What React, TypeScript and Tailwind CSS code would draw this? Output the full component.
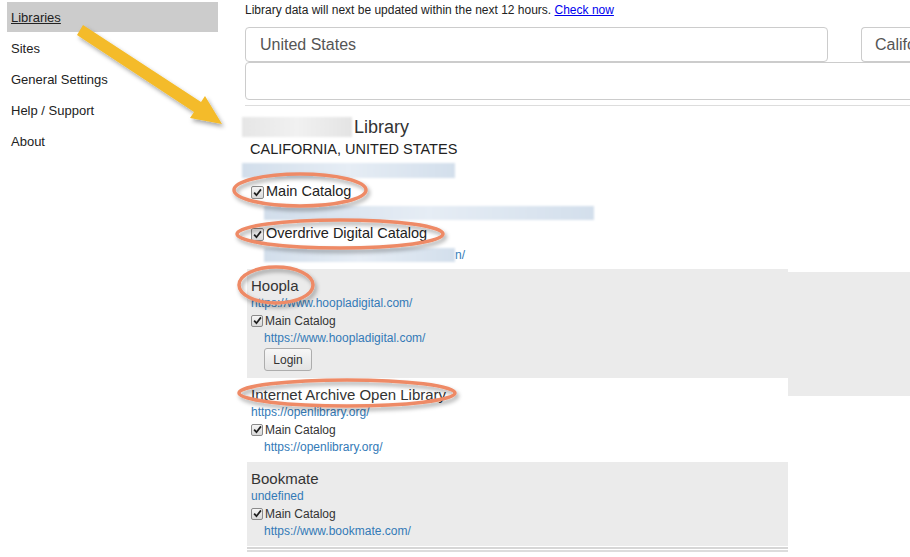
import React from "react";

type Catalog = { name: string; url: string };
type Provider = {
  id: string;
  name: string;
  url: string;
  catalogs: Catalog[];
  login?: boolean;
  shaded?: boolean;
};

const navItems = ["Libraries", "Sites", "General Settings", "Help / Support", "About"];

const providers: Provider[] = [
  {
    id: "hoopla",
    name: "Hoopla",
    url: "https://www.hoopladigital.com/",
    catalogs: [{ name: "Main Catalog", url: "https://www.hoopladigital.com/" }],
    login: true,
    shaded: true,
  },
  {
    id: "openlibrary",
    name: "Internet Archive Open Library",
    url: "https://openlibrary.org/",
    catalogs: [{ name: "Main Catalog", url: "https://openlibrary.org/" }],
  },
  {
    id: "bookmate",
    name: "Bookmate",
    url: "undefined",
    catalogs: [{ name: "Main Catalog", url: "https://www.bookmate.com/" }],
    shaded: true,
  },
];

function Checkbox({ className }: { className: string }) {
  return (
    <span
      className={`inline-flex shrink-0 items-center justify-center rounded-[2px] border border-[#8a8a8a] bg-gradient-to-b from-[#f6f6f6] to-[#d9d9d9] ${className}`}
    >
      <svg viewBox="0 0 12 12" className="h-[9px] w-[9px]" aria-hidden="true">
        <path d="M1.5 6.2 L4.6 9.6 L10.6 1.8" stroke="#1f1f1f" strokeWidth="2.3" fill="none" />
      </svg>
    </span>
  );
}

function BlueBlur({ className }: { className: string }) {
  return (
    <div
      className={`bg-gradient-to-r from-[#d2deeb] via-[#e6edf5] to-[#d3dfec] blur-[1px] ${className}`}
    />
  );
}

function ProviderBlock({ provider }: { provider: Provider }) {
  return (
    <div
      className={`ml-[2px] w-[541px] shrink-0 px-[4px] pb-[7px] pt-[8px] ${provider.shaded ? "bg-[#ebebeb]" : "bg-white"}`}
    >
      <div className="text-[15px] leading-[18px] text-[#333]">{provider.name}</div>
      <div className="text-[12px] leading-[16px] text-[#337ab7]">{provider.url}</div>
      {provider.catalogs.map((c) => (
        <div key={c.name}>
          <div className="flex h-[19px] items-center gap-[2px] text-[12px] text-[#333]">
            <Checkbox className="h-[12px] w-[12px]" />
            <span>{c.name}</span>
          </div>
          <div className="pl-[13px] text-[12px] leading-[16px] text-[#337ab7]">{c.url}</div>
        </div>
      ))}
      {provider.login && (
        <button className="ml-[13px] mt-[2px] h-[23px] w-[48px] rounded-[3px] border border-[#adadad] bg-gradient-to-b from-[#f7f7f7] to-[#e3e3e3] text-[12px] text-[#333]">
          Login
        </button>
      )}
    </div>
  );
}

function Annotations() {
  return (
    <svg className="pointer-events-none absolute inset-0" width="910" height="557" aria-hidden="true">
      <defs>
        <filter id="shadow" x="-20%" y="-40%" width="140%" height="180%">
          <feDropShadow dx="2" dy="3" stdDeviation="2" floodColor="#000" floodOpacity="0.35" />
        </filter>
      </defs>
      <polygon
        points="83,25 201,102 205,96 222,124 190,118 194,112 77,35"
        fill="#f4bb29"
        filter="url(#shadow)"
      />
      <g fill="none" stroke="#ee8a66" strokeWidth="3.5" filter="url(#shadow)">
        <ellipse cx="300" cy="190" rx="66" ry="16" />
        <ellipse cx="340" cy="234" rx="103" ry="14" />
        <ellipse cx="276" cy="285" rx="37" ry="18" />
        <ellipse cx="347" cy="393" rx="108" ry="13" />
      </g>
    </svg>
  );
}

export default function App() {
  return (
    <div className="relative h-[557px] w-[910px] overflow-hidden bg-white font-['Liberation_Sans',Arial,sans-serif] text-[#222]">
      <div className="flex">
        {/* Sidebar */}
        <nav className="w-[218px] shrink-0 pl-[7px] pt-[2px] text-[13px]">
          {navItems.map((item, i) => (
            <div
              key={item}
              className={`flex items-center px-[4px] pt-[2px] ${i === 0 ? "h-[30px] bg-[#cccccc] underline" : "h-[31px]"}`}
            >
              {item}
            </div>
          ))}
        </nav>

        {/* Main */}
        <main className="min-w-0 flex-1 overflow-hidden pl-[27px]">
          <div className="pt-[2px] text-[12px] leading-[16px] text-[#222]">
            Library data will next be updated within the next 12 hours.{" "}
            <a className="text-[#0000ee] underline">Check now</a>
          </div>

          <div className="mt-[9px] flex gap-[33px]">
            <div className="flex h-[35px] w-[583px] shrink-0 items-center rounded-[4px] border border-[#cccccc] pl-[14px] text-[16px] text-[#555]">
              United States
            </div>
            <div className="flex h-[35px] w-[49px] shrink-0 items-center overflow-hidden rounded-l-[4px] border border-r-0 border-[#cccccc] pl-[13px] text-[16px] text-[#555] whitespace-nowrap">
              Califo
            </div>
          </div>
          <div className="h-[38px] w-[720px] rounded-[4px] border border-[#cccccc]" />
          <div className="mt-[5px] border-t border-[#dddddd]" />

          {/* Library card */}
          <div className="mt-[11px] flex h-[20px] items-center">
            <div className="-ml-[3px] h-[20px] w-[110px] bg-gradient-to-r from-[#e6e6e6] via-[#f1f1f1] to-[#e4e4e4] blur-[1px]" />
            <span className="ml-[2px] text-[18px] text-[#333]">Library</span>
          </div>
          <div className="ml-[5px] mt-[4px] text-[14.5px] leading-[16px] text-[#222]">
            CALIFORNIA, UNITED STATES
          </div>
          <BlueBlur className="-ml-[3px] mt-[6px] h-[15px] w-[213px]" />

          <div className="ml-[6px] mt-[4px] flex h-[20px] items-center gap-[2px] text-[14.5px] text-[#222]">
            <Checkbox className="h-[13px] w-[13px]" />
            <span>Main Catalog</span>
          </div>
          <BlueBlur className="ml-[19px] mt-[4px] h-[14px] w-[330px]" />

          <div className="ml-[6px] mt-[4px] flex h-[20px] items-center gap-[2px] text-[14.5px] text-[#222]">
            <Checkbox className="h-[13px] w-[13px]" />
            <span>Overdrive Digital Catalog</span>
          </div>
          <div className="ml-[19px] mt-[3px] flex h-[16px] items-center">
            <BlueBlur className="h-[14px] w-[191px]" />
            <span className="text-[12px] text-[#337ab7]">n/</span>
          </div>

          <div className="mt-[6px] flex items-start">
            <ProviderBlock provider={providers[0]} />
            <div className="-mb-[18px] mt-[3px] h-[124px] w-[130px] shrink-0 bg-[#ebebeb]" />
          </div>
          <ProviderBlock provider={providers[1]} />
          <ProviderBlock provider={providers[2]} />
          <div className="ml-[2px] mt-[1px] w-[541px] border-t-[2px] border-[#d6d6d6]" />
          <div className="ml-[2px] mt-[1px] w-[541px] border-t-[2px] border-[#dcdcdc]" />
        </main>
      </div>
      <Annotations />
    </div>
  );
}
